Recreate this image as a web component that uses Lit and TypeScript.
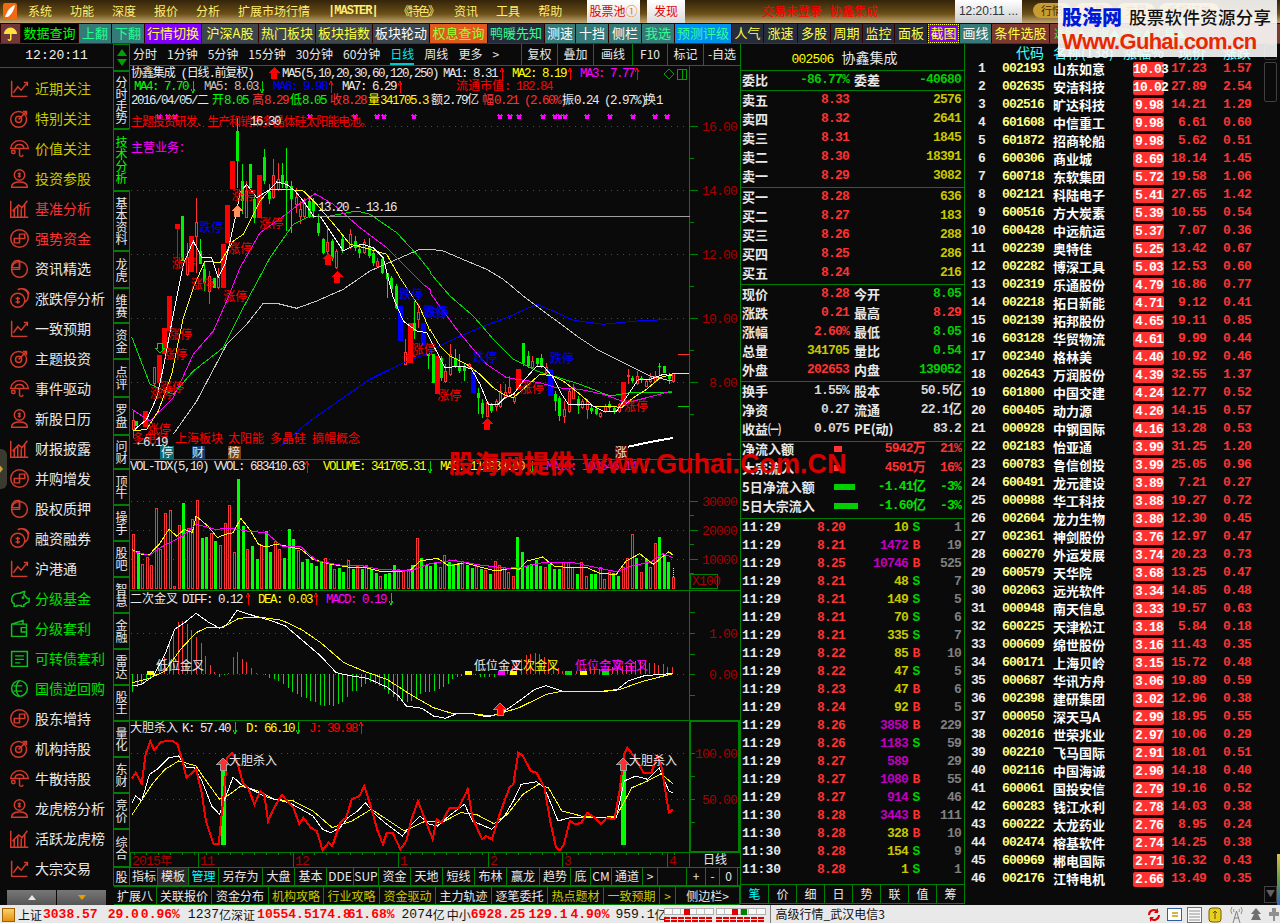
import { LitElement, html, css, svg } from 'lit';
import { customElement } from 'lit/decorators.js';

const UP = '#ff3232';
const GRID = '#008000';

// ---------- chart data, read off the picture ----------
type Pt = number[];
const za = ([x, y]: Pt) => [130 + x / 3, 100 + y / 3];
const zb = ([x, y]: Pt) => [430 + x / 3, 240 + y / 3];
const zc = ([x, y]: Pt) => [130 + x / 2.57, 440 + y / 3];
const zd = ([x, y]: Pt) => [130 + x / 2.57, 590 + y / 3];
const pairs = (s: string) => s.trim().split(/\s+/).map((p) => p.split(',').map(Number));
const poly = (list: Pt[]) => list.map((p) => `${p[0].toFixed(1)},${p[1].toFixed(1)}`).join(' ');

// x, body top, body bottom, wick top, wick bottom, kind
const CANDLES_A = `8,958,985,930,1010,h 19,960,975,0,0,g 46,930,978,0,0,s 73,800,848,800,860,h 88,762,845,0,0,s
103,680,760,0,0,s 116,585,690,0,0,s 142,370,385,385,470,s 157,345,480,0,0,g 170,470,520,425,525,h 184,405,513,0,0,s
197,365,405,290,515,h 211,450,490,415,490,g 223,505,545,480,570,g 238,525,570,510,610,h 253,530,560,530,560,g
265,530,558,500,565,h 280,430,560,0,0,s 292,312,425,0,0,s 307,180,265,0,0,s 320,90,180,50,260,g 335,240,300,190,340,g
347,270,350,240,350,h 361,190,260,190,260,g 373,295,350,280,365,g 388,222,352,0,0,s 403,168,240,145,250,g
416,270,295,250,310,g 430,222,290,175,295,h 443,235,265,185,270,h 457,222,245,185,260,g 469,240,262,140,390,g
484,255,295,240,395,g 497,290,310,260,335,h 510,325,345,300,370,h 523,305,345,290,350,h 537,300,345,290,350,g
550,300,330,290,350,g 565,365,395,340,405,g 580,415,455,410,460,g 592,425,450,375,470,h 607,420,475,415,480,g
619,450,500,445,505,h 635,415,450,400,455,g 660,400,440,385,445,h 674,420,440,405,450,g 688,445,455,430,470,g
703,425,455,415,460,h 716,435,465,410,470,g 730,455,485,450,495,g 742,480,495,470,500,h 757,475,515,470,520,g
770,515,535,515,590,g 784,530,565,525,575,g 797,555,620,550,625,g 811,615,720,0,0,b 825,755,790,715,790,h
839,665,780,0,0,s 853,665,690,600,715,g 865,635,655,610,680,h 880,665,735,0,0,b 893,755,765,755,805,g`;
const CANDLES_B = `8,340,425,340,425,g 20,345,458,0,0,s 34,350,410,345,420,g 46,390,420,370,425,h 61,340,400,310,405,h 74,350,375,325,380,g
88,375,390,340,395,g 103,375,390,365,420,g 116,370,380,365,385,h 130,390,455,0,0,b 143,455,470,440,520,g
157,485,520,475,530,g 170,485,525,480,528,h 184,490,510,485,515,g 197,480,495,475,510,h 211,450,495,430,500,h
224,455,470,430,475,h 238,440,455,405,460,h 252,470,480,460,490,h 265,385,445,0,0,s 280,305,365,305,375,g
293,345,375,330,380,g 307,362,380,345,385,h 320,352,370,350,375,g 334,350,375,340,380,g 347,380,395,365,400,h
361,385,465,0,0,b 374,460,480,450,510,g 388,470,525,465,540,g 403,505,525,480,545,h 416,450,510,440,515,h
429,440,472,430,475,h 443,475,495,465,520,g 457,480,500,475,505,h 470,480,505,475,535,h 484,500,510,495,520,g
497,503,520,500,522,g 511,518,525,514,530,h 525,495,510,490,515,h 538,490,500,480,510,g 552,500,510,495,520,g
566,490,510,485,515,h 580,423,495,0,0,s 593,402,405,385,430,h 607,410,420,405,425,g 620,405,428,390,432,h
634,410,418,405,425,g 647,420,435,415,438,h 661,408,420,395,425,h 675,405,420,390,425,h 688,375,378,365,405,g
703,375,395,375,395,g 716,405,415,395,430,g 730,398,422,395,425,h`;
const candles = [
  ...CANDLES_A.trim().split(/\s+/).map((c) => ({ c, f: za })),
  ...CANDLES_B.trim().split(/\s+/).map((c) => ({ c, f: zb })),
].map(({ c, f }) => {
  const p = c.split(',');
  const [x, t] = f([+p[0], +p[1]]);
  const b = f([+p[0], +p[2]])[1];
  const wt = +p[3] ? f([+p[0], +p[3]])[1] : 0;
  const wb = +p[4] ? f([+p[0], +p[4]])[1] : 0;
  return { x: Math.round(x), t, b, wt, wb, k: p[5] };
});

const MA_WHITE = [
  ...pairs('15,985 50,955 80,890 100,800 130,640 160,490 190,420 215,470 245,470 265,530 285,490 320,330 330,275 350,250 380,290 420,265 440,243 470,250 495,270 520,300 550,345 570,345 600,390 640,450 670,435 700,430 730,440 760,470 790,590 820,660 860,690 890,695').map(za),
  ...pairs('0,295 30,350 45,380 60,380 75,375 100,375 125,385 150,430 175,490 205,490 225,470 250,460 280,420 320,375 340,375 370,410 395,460 415,490 445,490 480,490 520,510 560,510 585,475 625,415 660,415 700,400 725,405').map(zb),
];
const MA_YELLOW = [
  ...pairs('10,990 50,985 85,930 125,820 160,650 190,560 225,480 270,485 310,420 340,400 390,300 420,265 470,265 520,270 560,310 620,380 660,430 720,445 770,460 810,530 870,620 900,690').map(za),
  ...pairs('0,265 30,315 60,345 110,370 150,400 190,440 220,460 250,470 290,435 330,400 370,405 400,420 450,460 490,495 540,495 575,500 610,470 650,445 690,410 725,400').map(zb),
];
const MA_MAGENTA = [
  ...pairs('5,925 60,960 130,890 190,760 250,690 290,600 330,500 390,395 440,360 500,315 555,278 610,310 690,380 770,440 820,490 880,550 900,565').map(za),
  ...pairs('0,155 40,210 80,265 130,325 170,370 230,410 330,425 380,440 450,445 520,460 590,485 650,470 725,450').map(zb),
];
const MA_GREEN = [
  ...pairs('5,708 60,850 130,880 190,810 280,740 340,620 420,470 490,370 540,345 600,345 680,330 720,340 800,395 860,460 900,510').map(za),
  ...pairs('0,95 60,165 130,225 190,295 250,355 320,390 370,405 450,430 540,465 600,455 725,455').map(zb),
];
const MA_GREY = [
  ...pairs('130,1000 200,900 290,730 350,670 400,607 440,607 500,622 560,600 640,565 720,510 800,475 870,445 900,445').map(za),
  ...pairs('0,25 40,30 110,60 170,85 220,115 280,165 340,210 380,240 440,285 500,325 580,365 660,405 725,420').map(zb),
];
const MA_BLUE = [
  ...pairs('450,1035 540,960 640,890 720,835 820,785 900,755').map(za),
  ...pairs('0,330 70,295 150,260 230,230 320,190 370,210 430,238 520,250 620,240 725,235').map(zb),
];

const LIMIT_UP = [
  ...pairs('50,985 115,700 100,760 60,875 90,858 125,485 182,548 280,585 295,442 305,283 388,365 845,745').map(za),
  ...pairs('22,462 270,442 582,495').map(zb),
];
const LIMIT_DOWN = [...pairs('208,378 808,578 880,630').map(za), ...pairs('-15,212 130,348 360,350').map(zb)];

const VOL = `r280 g330 r370 r350 r372 r202 r325 r217 r207 r437 r252 g186 r262 r235 r177 g290 g288 r276 g300 r312 r248 r192 r333 g113
g255 r325 g315 g353 r313 g270 g333 r300 r325 g350 g264 g295 r328 g363 g355 g365 g375 g360 r352 g365 r385 g380 g393 r357 g385 r375
g385 r373 g385 g395 r405 g400 g395 g373 r385 r390 r385 g373 r292 g350 g372 g375 g365 r378 r342 g363 g370 g365 r360 g372 g380 r375
g385 r388 g398 r360 r372 r378 r395 r405 g288 g333 g375 g370 g358 g375 r380 g370 g385 g385 r365 r365 r378 g398 r365 r405 g400 g400
r380 r415 r393 g395 g405 r380 r352 r280 g352 r393 g355 r380 r307 g288 g340 g362 r410`.trim().split(/\s+/);
const VOL_Y = pairs('5,325 30,340 50,340 75,310 100,265 120,285 140,265 160,275 170,225 200,255 225,290 245,280 265,275 285,232 310,270 330,310 350,318 375,310 400,315 440,325 470,355 510,368 560,378 600,378 640,390 680,392 720,388 745,360 790,352 820,375 860,365 900,378 940,390 980,382 1000,385 1020,360 1060,348 1090,375 1130,380 1170,378 1210,398 1250,400 1275,360 1310,338 1345,370 1385,332 1395,342').map(zc);
const VOL_M = pairs('5,330 50,343 75,322 110,300 135,285 170,250 220,265 260,262 300,270 350,275 390,315 440,318 480,360 540,372 600,375 640,385 720,390 770,368 830,358 900,372 970,382 1010,378 1060,365 1140,365 1200,380 1250,392 1290,375 1340,362 1370,338 1395,350').map(zc);

const HIST = [-55, -40, -30, -20, -12, -5, 15, 50, 100, 130, 155, 160, 150, 132, 110, 92, 55, 28, 5, -8, -2, 2, 52, 65, 45, 35, 18, 2, 1, -2, -12, -15, -22, -30, -42, -55, -60, -68, -72, -82, -85, -92, -95, -92, -95, -90, -85, -70, -50, -50, -38, -30, -25, -30, -35, -45, -60, -70, -80, -85, -85, -80, -70, -60, -55, -55, -50, -45, -40, -30, -15, -10, -5, 0, 0, -3, -8, -10, -10, -8, 5, 10, 18, 25, 35, 45, 58, 60, 62, 60, 52, 45, 32, 18, 8, 4, 5, 10, 15, 15, 20, 20, 15, 12, 20, 22, 20, 25, 28, 32, 38, 40, 40, 32, 32, 28, 30, 22, 22];
const DIFF = pairs('5,285 30,280 60,255 90,190 115,115 140,95 170,67 200,92 230,112 250,100 275,58 320,75 360,88 400,105 440,145 490,195 530,245 570,255 610,262 660,288 690,315 710,345 750,352 780,375 810,382 840,368 880,368 920,378 960,362 1000,330 1040,295 1070,284 1110,300 1150,302 1200,303 1250,298 1280,270 1320,255 1360,250 1395,248').map(zd);
const DEA = pairs('5,275 50,262 90,240 130,175 170,125 200,108 240,108 280,82 330,78 390,88 440,115 490,155 550,215 600,240 660,265 720,310 780,350 830,368 880,368 930,375 1000,350 1070,310 1100,303 1200,302 1260,295 1320,270 1395,248').map(zd);

const KDJ_J = pairs('5,562 15,545 30,578 40,490 52,450 62,478 80,452 110,450 122,460 135,510 145,560 170,535 185,610 195,690 215,760 228,760 240,620 250,500 262,485 275,510 290,575 305,595 320,640 335,600 345,610 355,690 370,650 390,612 420,650 435,700 445,680 465,710 480,720 495,778 510,755 520,765 540,695 555,680 570,625 590,615 602,585 620,650 635,715 650,760 660,725 675,725 695,775 710,750 722,690 740,630 760,690 778,745 788,685 800,695 822,650 845,650 868,595 880,680 905,745 915,735 930,745 950,670 975,590 985,580 998,485 1010,495 1030,540 1045,545 1065,590 1080,690 1095,770 1105,778 1115,760 1130,690 1145,700 1160,695 1175,665 1195,680 1210,700 1225,680 1245,685 1258,600 1270,490 1278,470 1295,495 1320,545 1340,545 1355,495 1365,520 1385,665 1395,655').map(zd);
const KDJ_K = pairs('5,635 15,615 30,630 50,550 70,535 100,500 125,495 145,530 165,530 185,570 210,645 230,670 245,620 265,558 285,580 320,600 345,615 370,625 410,635 440,655 470,675 495,715 515,725 540,710 560,680 585,660 605,635 630,670 660,700 700,735 720,705 745,675 770,700 790,705 825,670 860,640 880,690 930,715 960,680 985,630 1005,580 1045,572 1065,590 1100,690 1130,680 1160,680 1200,680 1250,680 1270,570 1300,555 1330,565 1360,530 1385,600 1395,605').map(zd);
const KDJ_D = pairs('5,672 20,645 60,575 90,535 125,510 170,525 190,560 230,625 250,615 285,585 330,600 370,625 420,630 470,660 520,710 570,690 620,655 660,685 705,720 760,690 800,695 850,665 890,670 935,698 970,670 1010,610 1050,580 1075,590 1110,660 1160,675 1210,680 1250,675 1290,590 1330,570 1365,548 1395,578').map(zd);

const CROSSES = [159, 168, 175, 310, 355, 377, 384, 414, 500, 510, 519, 543, 555, 560, 565, 587, 610, 633, 655, 667];

// ---------- svg helpers ----------
const CJK = /[\u3000-\u9fff\uff00-\uffef]/;
const mix = (s: string) =>
  s.split(/([\u3000-\u9fff\uff00-\uffef]+)/).filter(Boolean).map((p) =>
    CJK.test(p) ? svg`<tspan class="c">${p}</tspan>` : svg`<tspan class="m">${p}</tspan>`,
  );
const T = (x: number, y: number, s: string, c = '#e8e8e8', cls = '') =>
  svg`<text class=${cls} x=${x} y=${y} fill=${c}>${mix(s)}</text>`;
const upThin = (x: number, y: number) =>
  svg`<path d="M${x} ${y + 12}V${y}M${x - 2} ${y + 4}L${x} ${y}L${x + 2} ${y + 4}" stroke="#ff0000" fill="none"/>`;
const downThin = (x: number, y: number) =>
  svg`<path d="M${x} ${y}V${y + 12}M${x - 2} ${y + 8}L${x} ${y + 12}L${x + 2} ${y + 8}" stroke="#00d000" fill="none"/>`;
const bigUp = (x: number, y: number, fill = '#ff0000', stroke = 'none') =>
  svg`<path d="M${x} ${y}l6 6h-3v6h-6v-6h-3z" fill=${fill} stroke=${stroke}/>`;
const line = (list: Pt[], c: string, w = 1) =>
  svg`<polyline points=${poly(list)} fill="none" stroke=${c} stroke-width=${w}/>`;
const dots = (y: number) => svg`<line class="dot" x1="131" x2="689" y1=${y} y2=${y}/>`;
const hline = (y: number) => svg`<line x1="130" x2="740" y1=${y} y2=${y} stroke=${GRID}/>`;

@customElement('kline-chart')
export class KlineChart extends LitElement {
  static styles = css`
    :host { display: block; width: 610px; height: 803px; }
    svg { display: block; shape-rendering: crispEdges; }
    text { font-size: 12px; white-space: pre; }
    .c { font-family: "Noto Sans CJK SC", sans-serif; font-size: 12px; }
    .m { font-family: "Liberation Mono", monospace; font-size: 12.5px; letter-spacing: -1.5px; }
    .axis .m { letter-spacing: -.8px; font-size: 13px; }
    .tight .c { letter-spacing: -1.1px; }
    .dot { stroke: #008000; stroke-dasharray: 1 5; }
  `;

  private _candle(c: (typeof candles)[number]) {
    const colour = { h: UP, s: '#ff0000', g: '#00f000', b: '#0000ff' }[c.k] as string;
    const wide = c.k === 's' || c.k === 'b' ? 5 : 3;
    const wick = c.wt
      ? svg`<line x1=${c.x + 0.5} x2=${c.x + 0.5} y1=${c.wt} y2=${c.wb} stroke=${colour}/>`
      : '';
    const left = c.x - Math.floor(wide / 2);
    const body = c.k === 'h'
      ? svg`<rect x=${left + 0.5} y=${c.t} width="2" height=${c.b - c.t} fill="#0a0a0a" stroke=${colour}/>`
      : svg`<rect x=${left} y=${c.t} width=${wide} height=${c.b - c.t} fill=${colour}/>`;
    return svg`${wick}${body}`;
  }

  private _main() {
    return svg`
      ${[125, 189, 253, 317, 381].map(dots)}
      ${[['16.00', 125], ['14.00', 189], ['12.00', 253], ['10.00', 317], ['8.00', 381]].map(
        ([s, y]) => svg`<text class="axis" x="737" y=${(y as number) + 5} text-anchor="end" fill="#a80000">${mix(s as string)}</text>`,
      )}
      ${[125, 157, 189, 221, 253, 285, 317, 349, 381, 413].map((y) => svg`<line x1="690" x2=${y % 64 === 61 ? 698 : 694} y1=${y} y2=${y} stroke=${GRID}/>`)}

      ${T(131, 76, '协鑫集成 (日线.前复权)', '#f0f0f0', 'tight')}
      ${bigUp(274, 66)}
      ${T(282, 76, 'MA5(5,10,20,30,60,120,250)')}
      ${T(443, 76, 'MA1: 8.31')}${upThin(502, 67)}
      ${T(512, 76, 'MA2: 8.19', '#ffff00')}${upThin(570, 67)}
      ${T(580, 76, 'MA3: 7.77', '#ff00ff')}${upThin(637, 67)}
      ${T(134, 89, 'MA4: 7.70', '#00ff00')}${downThin(193, 80)}
      ${T(204, 89, 'MA5: 8.03', '#c0c0c0')}${downThin(262, 80)}
      ${T(273, 89, 'MA6: 9.98', '#0000ff')}${upThin(331, 80)}
      ${T(342, 89, 'MA7: 6.29')}${upThin(400, 80)}
      ${T(456, 89, '流通市值: 182.84', '#ff0000')}
      ${T(131, 103, '2016/04/05/二')}
      ${T(212, 103, '开8.05', '#00ff00')}
      ${T(252, 103, '高8.29', '#ff3232')}
      ${T(290, 103, '低8.05', '#00ff00')}
      ${T(330, 103, '收8.28', '#ff3232')}
      ${T(368, 103, '量341705.3', '#ffff00')}
      ${T(431, 103, '额2.79亿')}
      ${T(482, 103, '幅0.21 (2.60%)', '#ff3232')}
      ${T(562, 103, '振0.24 (2.97%)')}
      ${T(644, 103, '换1')}
      <path d="M669 68l5 5-5 5-5-5z" fill="none" stroke="#00a000"/>
      <path d="M677.5 68.5h9v10h-9zM682 68.5v10" fill="none" stroke="#00a000"/>

      ${CROSSES.map((x) => svg`<path d="M${x - 2} 114l4 4m0-4l-4 4" stroke="#ff00ff" fill="none" stroke-width="1.5"/>`)}
      ${candles.map((c) => this._candle(c))}
      ${line(MA_GREY, '#c8c8c8')}${line(MA_BLUE, '#0000ff')}${line(MA_GREEN, '#00e000')}
      ${line(MA_MAGENTA, '#ff00ff')}${line(MA_YELLOW, '#ffff00')}${line(MA_WHITE, '#ffffff')}

      <line x1="316" x2="690" y1="215" y2="215" stroke="#a0a0a0"/>
      ${T(318, 210, '13.20 - 13.16')}
      <line x1="678" x2="689" y1="353" y2="353" stroke="#ff3232"/>
      <line x1="672" x2="689" y1="372" y2="372" stroke="#ffff00"/>
      <line x1="678" x2="689" y1="405" y2="405" stroke="#00c000"/>
      <polyline points="627,446 650,441 673,437" fill="none" stroke="#ffffff" stroke-width="2"/>

      ${T(131, 125, '主题投资研发、生产和销售多晶体硅太阳能电池。', '#ff0000', 'tight')}
      ${T(250, 124, '16.30')}
      ${T(131, 151, '主营业务：', '#ff00ff')}
      ${LIMIT_UP.map(([x, y]) => T(x, y + 5, '涨停', '#ff0000'))}
      ${LIMIT_DOWN.map(([x, y]) => T(x, y + 5, '跌停', '#0000ff'))}
      ${T(132, 442, '多电行', '#ff0000')}
      ${T(175, 442, '上海板块', '#ff0000')}${T(228, 442, '太阳能', '#ff0000')}
      ${T(270, 442, '多晶硅', '#ff0000')}${T(312, 442, '摘帽概念', '#ff0000')}
      ${T(137, 445, '←6.19')}

      ${bigUp(328, 252)}${bigUp(337, 270)}${bigUp(410, 350)}${bigUp(487, 417)}
      ${bigUp(237, 204, '#ff9060')}
      <path d="M160 352l-5-5h2.5v-5h5v5h2.5z" fill="none" stroke="#00e000"/>

      <rect x="160" y="445" width="14" height="13" fill="#0a6a70"/>${T(161, 456, '停')}
      <rect x="192" y="445" width="13" height="13" fill="#103c6a"/>${T(192, 456, '财')}
      <rect x="228" y="445" width="13" height="13" fill="#7a4010"/>${T(228, 456, '榜')}
      <rect x="615" y="445" width="13" height="13" fill="#700000"/>${T(615, 456, '涨')}
    `;
  }

  private _volume() {
    return svg`
      ${[500, 529, 558].map(dots)}
      ${[['30000', 500], ['20000', 529], ['10000', 558]].map(
        ([s, y]) => svg`<text class="axis" x="737" y=${(y as number) + 5} text-anchor="end" fill="#a80000">${mix(s as string)}</text>`,
      )}
      ${[500, 514, 529, 543, 558, 572].map((y) => svg`<line x1="690" x2=${y % 29 === 7 ? 698 : 694} y1=${y} y2=${y} stroke=${GRID}/>`)}
      ${T(130, 469, 'VOL-TDX(5,10)')}
      ${T(214, 469, 'VVOL: 683410.63')}${upThin(307, 460)}
      ${T(323, 469, 'VOLUME: 341705.31', '#ffff00')}${downThin(430, 460)}
      ${T(440, 469, 'MA5: 113938.00', '#ffff00')}${downThin(532, 460)}
      ${T(546, 469, 'MA10: 103546.14', '#ff00ff')}${downThin(645, 460)}
      ${VOL.map((v, i) => {
        const x = Math.round(132 + i * 4.576);
        const top = 440 + +v.slice(1) / 3;
        return v[0] === 'g'
          ? svg`<rect x=${x} y=${top} width="3" height=${587.5 - top} fill="#00ff00"/>`
          : svg`<rect x=${x + 0.5} y=${top} width="2" height=${587.5 - top} fill="#0a0a0a" stroke=${UP}/>`;
      })}
      ${line(VOL_Y, '#ffff00')}${line(VOL_M, '#ff00ff')}
      <line x1="673.5" x2="673.5" y1="567" y2="577" stroke="#ffff00" stroke-dasharray="1 1"/>
      <rect x="690.5" y="573.5" width="27" height="14" fill="none" stroke=${GRID}/>
      <text class="axis" x="692" y="584" fill="#a80000">${mix('X100')}</text>
    `;
  }

  private _macd() {
    return svg`
      ${[632, 673].map(dots)}
      <text class="axis" x="737" y="637" text-anchor="end" fill="#a80000">${mix('1.00')}</text>
      <text class="axis" x="737" y="678" text-anchor="end" fill="#a80000">${mix('0.00')}</text>
      ${[611, 632, 653, 673, 694].map((y) => svg`<line x1="690" x2="695" y1=${y} y2=${y} stroke=${GRID}/>`)}
      ${T(130, 602, '二次金叉')}
      ${T(182, 602, 'DIFF: 0.12')}${upThin(248, 592)}
      ${T(258, 602, 'DEA: 0.03', '#ffff00')}${upThin(316, 592)}
      ${T(326, 602, 'MACD: 0.19', '#ff00ff')}${downThin(391, 592)}
      ${HIST.map((h, i) => {
        const x = Math.round(132 + i * 4.576) + 0.5;
        const y = 673 - h / 3;
        return svg`<line x1=${x} x2=${x} y1="673" y2=${y} stroke=${h > 0 ? UP : '#00e000'}/>`;
      })}
      ${line(DIFF, '#ffffff')}${line(DEA, '#ffff00')}
      ${[[147, '#ffff00'], [465, '#ffff00'], [498, '#ff00ff'], [510, '#ffff00'], [565, '#00e000'], [580, '#ffff00'], [602, '#00e000']].map(
        ([x, c]) => svg`<rect x=${x} y="670" width="7" height="4" fill=${c}/>`,
      )}
      ${T(156, 669, '低位金叉')}${T(474, 669, '低位金叉')}
      ${T(511, 669, '二次金叉', '#ffff00')}
      ${T(575, 669, '低位金叉', '#ff00ff')}${T(600, 669, '二次金叉', '#ff00ff')}
      ${bigUp(500, 702, '#ff0000', '#909090')}
    `;
  }

  private _kdj() {
    return svg`
      ${[752, 798].map(dots)}
      <text class="axis" x="737" y="757" text-anchor="end" fill="#a80000">${mix('100.00')}</text>
      <text class="axis" x="737" y="803" text-anchor="end" fill="#a80000">${mix('50.00')}</text>
      ${[752, 775, 798, 821].map((y) => svg`<line x1="690" x2="695" y1=${y} y2=${y} stroke=${GRID}/>`)}
      <rect x="690" y="720" width="49" height="131" fill="none" stroke=${GRID} stroke-width="2"/>
      ${T(130, 731, '大胆杀入')}
      ${T(182, 731, 'K: 57.40')}${downThin(235, 721)}
      ${T(246, 731, 'D: 66.10', '#ffff00')}${downThin(298, 721)}
      ${T(309, 731, 'J: 39.98', '#ff0000')}${upThin(361, 721)}
      <rect x="221" y="767" width="5" height="77" fill="#00ff00"/>
      <rect x="621" y="767" width="5" height="77" fill="#00ff00"/>
      ${line(KDJ_D, '#ffff00')}${line(KDJ_K, '#ffffff')}${line(KDJ_J, '#ff0000', 2)}
      ${bigUp(223, 757, '#ff3030', '#a0a0a0')}${bigUp(623, 757, '#ff3030', '#a0a0a0')}
      ${T(229, 764, '大胆杀入')}${T(629, 764, '大胆杀入')}
    `;
  }

  private _dates() {
    const months: [string, number][] = [['2015年', 132], ['11', 200], ['12', 295], ['1', 400], ['2', 490], ['3', 564], ['4', 669]];
    return svg`
      ${months.map(([s, x]) => svg`
        <line x1=${x - 2} x2=${x - 2} y1="851" y2="867" stroke=${GRID}/>
        <text x=${x} y="864" fill="#a80000" class="axis">${mix(s)}</text>`)}
      ${Array.from({ length: 46 }, (_, i) => svg`<line x1=${134 + i * 12} x2=${134 + i * 12} y1="851" y2="854" stroke=${GRID}/>`)}
      ${T(703, 863, '日线')}
    `;
  }

  render() {
    return html`
      <svg width="610" height="803" viewBox="130 64 610 803">
        <line x1="689.5" x2="689.5" y1="64" y2="867" stroke=${GRID}/>
        ${this._main()}${this._volume()}${this._macd()}${this._kdj()}${this._dates()}
        ${[64.5, 458.5, 589.5, 719.5, 851.5, 866.5].map(hline)}
      </svg>
    `;
  }
}

// ---------- left navigation ----------
const ICONS: Record<string, unknown> = {
  line: svg`<path d="M3 3v18h18M5 17l5-7 4 4 7-9M17 5h4v4"/>`,
  target: svg`<circle cx="11" cy="13" r="9"/><circle cx="11" cy="13" r="3.5" fill="currentColor"/><path d="M11 13l9-9M16 4h4v4"/>`,
  umbrella: svg`<path d="M2 12a10 9 0 0 1 20 0zM7 12c0-6 10-6 10 0M12 12v7a2 2 0 0 0 4 0"/><circle cx="5" cy="16" r="2"/>`,
  person: svg`<circle cx="12" cy="8" r="6"/><path d="M3 22c0-5 4-6 9-6s9 1 9 6zM12 5v6M10 6.5h3.5M10 9.5h3.5"/>`,
  bars: svg`<path d="M2 3v19h20M6 21v-8M10 21v-12M14 21v-9M18 21v-14M4 15l7-7 4 3 6-8"/>`,
  swirl: svg`<circle cx="12" cy="12" r="10"/><path d="M12 7h6v5h-6v5H6v-5h6z"/>`,
  pie: svg`<circle cx="12" cy="13" r="9"/><path d="M3 13h9V4"/><path d="M6 4a9 9 0 0 1 6-1v8H3a9 9 0 0 1 3-7z" fill="none"/>`,
  coins: svg`<circle cx="10" cy="14" r="8"/><path d="M10 2a8 8 0 0 1 12 7 8 8 0 0 1-4 7M14 1a8 8 0 0 1 9 6M10 10v8M7.5 12h5M7.5 16h5"/>`,
  piggy: svg`<path d="M3 13c0-5 4-7 9-7 2 0 3-2 6-2l-1 4c2 1 3 3 4 4h2v4l-3 1c-1 1-2 2-3 2v2h-3v-1H9v1H6v-3c-2-1-3-3-3-5z"/><circle cx="16" cy="11" r=".8"/>`,
  wallet: svg`<path d="M3 7h17v14H3zM3 7l13-4v4M20 11h-6v5h6"/>`,
  book: svg`<path d="M3 4h18v17H3zM7 9h10M7 13h10M7 17h6"/>`,
  coin: svg`<circle cx="12" cy="12" r="9"/><path d="M12 3c-5 4-5 14 0 18M5 9h10M5 15h10"/>`,
};

const RED_ICON = '#d63a2a';
const GREEN_ICON = '#10c020';
const YELLOW = '#c8c800';
const NAV: [string, string, string, string?][] = [
  ['近期关注', 'line', YELLOW], ['特别关注', 'target', YELLOW], ['价值关注', 'umbrella', YELLOW], ['投资参股', 'person', YELLOW],
  ['基准分析', 'bars', UP], ['强势资金', 'swirl', UP], ['资讯精选', 'pie', '#e8e8e8'], ['涨跌停分析', 'coins', '#e8e8e8'],
  ['一致预期', 'line', '#e8e8e8'], ['主题投资', 'target', '#e8e8e8'], ['事件驱动', 'umbrella', '#e8e8e8'], ['新股日历', 'person', '#e8e8e8'],
  ['财报披露', 'bars', '#e8e8e8'], ['并购增发', 'swirl', '#e8e8e8'], ['股权质押', 'pie', '#e8e8e8'], ['融资融券', 'coins', '#e8e8e8'],
  ['沪港通', 'line', '#e8e8e8'],
  ['分级基金', 'piggy', '#00e000', GREEN_ICON], ['分级套利', 'wallet', '#00e000', GREEN_ICON], ['可转债套利', 'book', '#00e000', GREEN_ICON], ['国债逆回购', 'coin', '#00e000', GREEN_ICON],
  ['股东增持', 'swirl', '#e8e8e8'], ['机构持股', 'target', '#e8e8e8'], ['牛散持股', 'umbrella', '#e8e8e8'], ['龙虎榜分析', 'person', '#e8e8e8'],
  ['活跃龙虎榜', 'bars', '#e8e8e8'], ['大宗交易', 'line', '#e8e8e8'],
];

@customElement('side-nav')
export class SideNav extends LitElement {
  static styles = css`
    :host { display: flex; flex-direction: column; width: 113px; position: relative; font-family: "Noto Sans CJK SC", sans-serif; background: #0a0a0a; }
    .clock { height: 23px; text-align: center; color: #f0f0f0; font: 13px/23px "Liberation Mono", monospace; border-bottom: 1px solid #008000; }
    .list { padding-top: 5px; }
    .row { display: flex; align-items: center; height: 30px; padding-left: 9px; font-size: 14px; white-space: nowrap; }
    .row svg { width: 21px; height: 21px; margin-right: 5px; flex: none; }
    .row svg * { stroke: currentColor; fill: none; stroke-width: 1.7; }
    .pager { display: flex; gap: 1px; margin: 7px 0 0 7px; }
    .pager div { width: 49px; height: 15px; background: linear-gradient(#777, #555); display: flex; align-items: center; justify-content: center; }
    .up { width: 0; height: 0; border: 4px solid transparent; border-bottom: 5px solid #e8e8e8; border-top: 0; }
    .down { width: 0; height: 0; border: 4px solid transparent; border-top: 5px solid #e8a000; border-bottom: 0; }
    .handle { position: absolute; left: -3px; top: 405px; width: 10px; height: 40px; border-radius: 0 6px 6px 0; background: #3a3a30; }
    .handle::after { content: ""; position: absolute; left: 2px; top: 15px; border: 5px solid transparent; border-left: 4px solid #c8a040; }
  `;

  render() {
    return html`
      <div class="clock">12:20:11</div>
      <div class="list">
        ${NAV.map(([label, icon, colour, ic]) => html`
          <div class="row" style="color:${colour}">
            <svg viewBox="0 0 24 24" style="color:${ic ?? RED_ICON}">${ICONS[icon]}</svg>${label}
          </div>`)}
      </div>
      <div class="pager"><div><span class="up"></span></div><div><span class="down"></span></div></div>
      <div class="handle"></div>
    `;
  }
}

// ---------- quote panel ----------
const G = '#00d000';
const Y = '#c8c800';
const W = '#d8d8d8';
const SELL = [['卖五', '8.33', '2576'], ['卖四', '8.32', '2641'], ['卖三', '8.31', '1845'], ['卖二', '8.30', '18391'], ['卖一', '8.29', '3082']];
const BUY = [['买一', '8.28', '636'], ['买二', '8.27', '183'], ['买三', '8.26', '288'], ['买四', '8.25', '286'], ['买五', '8.24', '216']];
const STATS: string[][] = [
  ['现价', '8.28', UP, '今开', '8.05', G], ['涨跌', '0.21', UP, '最高', '8.29', UP], ['涨幅', '2.60%', UP, '最低', '8.05', G],
  ['总量', '341705', Y, '量比', '0.54', G], ['外盘', '202653', UP, '内盘', '139052', G],
];
const FINANCE: string[][] = [
  ['换手', '1.55%', W, '股本', '50.5亿', W], ['净资', '0.27', W, '流通', '22.1亿', W], ['收益㈠', '0.075', W, 'PE(动)', '83.2', W],
];
const FLOWS: [string, number, string, string, string][] = [
  ['净流入额', 8, UP, '5942万', '21%'], ['大宗流入', 6, UP, '4501万', '16%'],
  ['5日净流入额', 21, '#00d000', '-1.41亿', '-3%'], ['5日大宗流入', 24, '#00d000', '-1.60亿', '-3%'],
];
const TICKS: [string, string, number, string, number][] = [
  ['11:29', '8.20', 10, 'S', 1], ['11:29', '8.21', 1472, 'B', 19], ['11:29', '8.25', 10746, 'B', 525], ['11:29', '8.21', 48, 'S', 7],
  ['11:29', '8.21', 149, 'S', 5], ['11:29', '8.21', 70, 'S', 6], ['11:29', '8.21', 335, 'S', 7], ['11:29', '8.22', 85, 'B', 10],
  ['11:29', '8.22', 47, 'S', 5], ['11:29', '8.23', 47, 'B', 6], ['11:29', '8.24', 92, 'B', 5], ['11:29', '8.26', 3858, 'B', 229],
  ['11:29', '8.26', 1183, 'S', 59], ['11:29', '8.27', 589, '', 29], ['11:29', '8.27', 1080, 'B', 55], ['11:29', '8.27', 914, 'S', 46],
  ['11:30', '8.28', 3443, 'B', 111], ['11:30', '8.28', 328, 'B', 10], ['11:30', '8.28', 154, 'S', 9], ['11:30', '8.28', 1, 'S', 1],
];

@customElement('quote-panel')
export class QuotePanel extends LitElement {
  static styles = css`
    :host { display: flex; flex-direction: column; width: 225px; height: 860px; box-sizing: border-box; border-left: 1px solid #008000; border-right: 1px solid #008000; color: #e8e8e8; font-family: "Noto Sans CJK SC", sans-serif; font-size: 13px; font-weight: 700; background: #0a0a0a; }
    .num { font-family: "Liberation Mono", "Noto Sans CJK SC", monospace; font-size: 13px; letter-spacing: -.8px; font-weight: 700; text-align: right; white-space: nowrap; }
    .head { height: 27px; line-height: 26px; text-align: center; font-weight: 400; font-size: 14px; border-bottom: 1px solid #008000; box-sizing: border-box; padding-right: 16px; }
    .head span { color: #ffff00; font: 13px "Liberation Mono", monospace; letter-spacing: -.8px; margin-right: 8px; }
    .sec { border-bottom: 1px solid #008000; box-sizing: border-box; }
    .sec97 { height: 97px; }
    .sec60 { height: 60px; }
    .flows { height: 80px; margin-top: -3px; }
    .two { display: grid; grid-template-columns: 32px 75px 5px 38px 1fr; height: 19px; line-height: 17px; padding: 0 3px 0 1px; white-space: nowrap; }
    .two > :nth-child(3) { grid-column: 4; }
    .ratio { height: 20px; }
    .flow { display: grid; grid-template-columns: 92px 36px 55px 1fr; height: 19px; line-height: 18px; padding: 0 3px 0 1px; white-space: nowrap; align-items: center; }
    .bar { height: 6px; }
    .tick { display: grid; grid-template-columns: 40px 63px 63px 17px 1fr; height: 18px; line-height: 18px; padding: 0 3px 0 1px; }
    .time { text-align: left; letter-spacing: 0; color: #e8e8e8; }
    .bs { text-align: center; letter-spacing: 0; }
    .tabs { display: flex; height: 18px; line-height: 17px; font-weight: 400; font-size: 12px; border-top: 1px solid #008000; border-bottom: 1px solid #008000; margin-top: auto; box-sizing: content-box; }
    .tabs div { flex: 1; text-align: center; border-right: 1px solid #008000; }
    .tabs div:last-child { border-right: 0; }
    .tabs .on { color: #00ffff; }
  `;

  private _two(r: string[]) {
    return html`<div class="two">
      <div>${r[0]}</div><div class="num" style="color:${r[2]}">${r[1]}</div>
      <div>${r[3]}</div><div class="num" style="color:${r[5]}">${r[4]}</div>
    </div>`;
  }

  private _book(r: string[]) {
    return html`<div class="two">
      <div>${r[0]}</div><div class="num" style="color:${UP}">${r[1]}</div>
      <div></div><div class="num" style="color:${Y}">${r[2]}</div>
    </div>`;
  }

  render() {
    return html`
      <div class="head"><span>002506</span>协鑫集成</div>
      <div class="sec ratio">${this._two(['委比', '-86.77%', G, '委差', '-40680', G])}</div>
      <div class="sec sec97">${SELL.map((r) => this._book(r))}</div>
      <div class="sec sec97">${BUY.map((r) => this._book(r))}</div>
      <div class="sec sec97">${STATS.map((r) => this._two(r))}</div>
      <div class="sec sec60">${FINANCE.map((r) => this._two(r))}</div>
      <div class="sec flows">
        ${FLOWS.map(([label, w, c, amount, pct]) => html`<div class="flow">
          <div>${label}</div>
          <div class="bar" style="width:${w}px;background:${c}"></div>
          <div class="num" style="color:${c === UP ? UP : '#00e000'};grid-column:3">${amount}</div>
          <div class="num" style="color:${c === UP ? UP : '#00e000'}">${pct}</div>
        </div>`)}
      </div>
      ${TICKS.map(([t, p, v, side, n]) => html`<div class="tick">
        <div class="num time">${t}</div>
        <div class="num" style="color:${UP}">${p}</div>
        <div class="num" style="color:${v >= 500 ? '#c000c0' : Y}">${v}</div>
        <div class="num bs" style="color:${side === 'B' ? UP : G}">${side}</div>
        <div class="num" style="color:#808080">${n}</div>
      </div>`)}
      <div class="tabs">${['笔', '价', '细', '日', '势', '联', '值', '筹'].map((t, i) => html`<div class=${i === 0 ? 'on' : ''}>${t}</div>`)}</div>
    `;
  }
}

// ---------- ranked stock list ----------
const STOCKS = `002193 山东如意 10.03 17.23 1.57|002635 安洁科技 10.02 27.89 2.54|002516 旷达科技 9.98 14.21 1.29|601608 中信重工 9.98 6.61 0.60|601872 招商轮船 9.98 5.62 0.51|600306 商业城 8.69 18.14 1.45|600718 东软集团 5.72 19.58 1.06|002121 科陆电子 5.41 27.65 1.42|600516 方大炭素 5.39 10.55 0.54|600428 中远航运 5.37 7.07 0.36|002239 奥特佳 5.25 13.42 0.67|002282 博深工具 5.03 12.53 0.60|002319 乐通股份 4.79 16.86 0.77|002218 拓日新能 4.71 9.12 0.41|002139 拓邦股份 4.65 19.11 0.85|603128 华贸物流 4.61 9.99 0.44|002340 格林美 4.40 10.92 0.46|002643 万润股份 4.39 32.55 1.37|601800 中国交建 4.24 12.77 0.52|600405 动力源 4.20 14.15 0.57|000928 中钢国际 4.16 13.28 0.53|002183 怡亚通 3.99 31.25 1.20|600783 鲁信创投 3.99 25.05 0.96|600491 龙元建设 3.89 7.21 0.27|000988 华工科技 3.88 19.27 0.72|002604 龙力生物 3.80 12.30 0.45|002361 神剑股份 3.76 12.97 0.47|600270 外运发展 3.74 20.23 0.73|600579 天华院 3.68 13.25 0.47|002063 远光软件 3.34 14.85 0.48|000948 南天信息 3.33 19.57 0.63|600225 天津松江 3.18 5.84 0.18|000609 绵世股份 3.16 11.43 0.35|600171 上海贝岭 3.15 15.72 0.48|000687 华讯方舟 3.06 19.89 0.59|002398 建研集团 3.02 12.96 0.38|000050 深天马A 2.99 18.95 0.55|002016 世荣兆业 2.97 10.06 0.29|002210 飞马国际 2.91 18.01 0.51|002116 中国海诚 2.90 14.18 0.40|600061 国投安信 2.79 19.16 0.52|600283 钱江水利 2.78 14.03 0.38|600222 太龙药业 2.76 8.95 0.24|002474 榕基软件 2.74 14.25 0.38|600969 郴电国际 2.71 16.32 0.43|002176 江特电机 2.66 13.49 0.35`
  .split('|').map((r) => r.split(' '));

@customElement('stock-list')
export class StockList extends LitElement {
  static styles = css`
    :host { display: flex; flex: 1; height: 861px; background: #0a0a0a; font-family: "Noto Sans CJK SC", sans-serif; }
    .body { width: 299px; }
    .grid { display: grid; grid-template-columns: 20px 17px 42px 9px 80px 31px 42px 45px; height: 18px; line-height: 18px; align-items: center; white-space: nowrap; }
    .hdr { color: #40ffff; font-size: 14px; height: 16px; line-height: 16px; }
    .hdr div { white-space: nowrap; }
    .code-h { grid-column: 2 / 4; }
    .pct-h { margin-left: -11px; }
    .r { text-align: right; }
    .num { font-family: "Liberation Mono", monospace; font-size: 13px; letter-spacing: -.8px; font-weight: 700; }
    .idx { color: #e8e8e8; }
    .code { color: #ffff80; grid-column: 3; }
    .name { color: #fff; font-weight: 700; font-size: 13px; grid-column: 5; }
    .pct { color: #fff; background: #ff3232; border-radius: 2px; height: 15px; line-height: 15px; direction: rtl; unicode-bidi: plaintext; text-align: right; padding-right: 1px; box-sizing: border-box; }
    .up { color: #ff3232; }
    .scroll { display: flex; flex-direction: column; width: 13px; }
    .btn { height: 14px; border: 1px solid #303030; border-radius: 2px; }
    .thumb { height: 38px; margin-top: 2px; border: 1px solid #404040; border-radius: 2px; }
    .end { margin-top: auto; height: 15px; margin-bottom: 2px; border: 1px solid #404040; color: #606060; font-size: 9px; text-align: center; }
    .strip { width: 3px; margin-top: 810px; height: 51px; background: linear-gradient(#e0c040, #60a040 50%, #3060c0); }
  `;

  render() {
    return html`
      <div class="body">
        <div class="grid hdr">
          <div></div>
          <div class="r code-h">代码</div><div></div>
          <div>名称(138)</div>
          <div class="r pct-h">涨幅%</div>
          <div class="r">现价</div><div class="r">涨跌</div>
        </div>
        ${STOCKS.map((s, i) => html`<div class="grid">
          <div class="num idx r">${i + 1}</div>
          <div class="num code">${s[0]}</div>
          <div class="name">${s[1]}</div>
          <div class="num pct">${s[2]}</div>
          <div class="num up r">${s[3]}</div>
          <div class="num up r">${s[4]}</div>
        </div>`)}
      </div>
      <div class="scroll">
        <div class="btn"></div><div class="thumb"></div>
        <div class="end">▼</div>
      </div>
      <div class="strip"></div>
    `;
  }
}

// ---------- page shell ----------
const MENU = ['系统', '功能', '深度', '报价', '分析', '扩展市场行情', '|MASTER|', '《特色》', '资讯', '工具', '帮助'];
type Tool = [string, number, string, string];
const TEAL = '#357a78';
const SLATE = '#3c464c';
const NAVY = '#262c3c';
const TOOLS: Tool[] = [
  ['数据查询', 57, '#000', '#00ff00'], ['上翻', 32, TEAL, '#20ff90'], ['下翻', 32, TEAL, '#20ff90'], ['行情切换', 56, '#8000ff', '#ffff40'],
  ['沪深A股', 56, SLATE, '#ffff40'], ['热门板块', 56, SLATE, '#ffff40'], ['板块指数', 56, SLATE, '#ffff40'], ['板块轮动', 56, SLATE, '#fff'],
  ['权息查询', 57, '#e05a20', '#90ff30'], ['鸭暖先知', 56, NAVY, '#30ff90'], ['测速', 30, TEAL, '#fff'], ['十挡', 32, TEAL, '#fff'],
  ['侧栏', 32, TEAL, '#fff'], ['我选', 32, TEAL, '#30ff90'], ['预测评级', 56, '#0090f0', '#30ff90'], ['人气', 31, NAVY, '#ffff40'],
  ['涨速', 33, NAVY, '#ffff40'], ['多股', 32, NAVY, '#ffff40'], ['周期', 31, NAVY, '#ffff40'], ['监控', 31, NAVY, '#ffff40'],
  ['面板', 32, NAVY, '#ffff40'], ['截图', 31, '#8000ff', '#ffff40'], ['画线', 31, TEAL, '#fff'], ['条件选股', 57, '#7a3a30', '#ffff40'],
];
const PERIODS = ['分时', '1分钟', '5分钟', '15分钟', '30分钟', '60分钟', '日线', '周线', '更多', '>'];
const ACTIONS: [string, number][] = [['复权', 36], ['叠加', 36], ['画线', 39], ['F10', 35], ['标记', 36], ['-自选', 37]];
const VTABS: [string, number][] = [
  ['分时走势', 58], ['技术分析', 62], ['基本资料', 60], ['龙虎', 37], ['维赛', 35], ['资金', 36], ['点评', 38], ['罗盘', 38], ['问财', 34], ['顶牛', 36],
  ['操手', 36], ['股吧', 36], ['智慧', 36], ['金融', 36], ['雷达', 36], ['股王', 36], ['量化', 36], ['东财', 36], ['竞价', 36], ['综合', 38],
];
const ROW1: [string, number][] = [
  ['指标', 27], ['模板', 31], ['管理', 30], ['另存为', 44], ['大盘', 32], ['基本', 32], ['DDE', 27], ['SUP', 25], ['资金', 32], ['天地', 32], ['短线', 32],
  ['布林', 32], ['赢龙', 33], ['趋势', 31], ['底', 20], ['CM', 21], ['通道', 31], ['>', 15], ['', 29], ['+', 19], ['-', 14], ['0', 18],
];
const ROW2: [string, number, boolean][] = [
  ['扩展八', 43, false], ['关联报价', 55, false], ['资金分布', 57, false], ['机构攻略', 55, true], ['行业攻略', 56, true], ['资金驱动', 56, true],
  ['主力轨迹', 56, false], ['逐笔委托', 56, false], ['热点题材', 56, true], ['一致预期', 56, true], ['>', 16, true], ['侧边栏>', 64, false],
];
const STATUS: [string, string, number][] = [
  ['上证', 'k', 0], ['3038.57', 'n', 1], ['29.0', 'n', 10], ['0.96%', 'n', 2], ['1237', 'b', 8], ['亿', 'k', 0],
  ['深证', 'k', 0], ['10554.51', 'n', 2], ['74.8', 'n', 0], ['61.68%', 'n', -3], ['2074', 'b', 7], ['亿', 'k', 0],
  ['中小', 'k', 2], ['6928.25', 'n', 0], ['129.1', 'n', 3], ['4.90%', 'n', 3], ['959.1', 'b', 6], ['亿', 'k', 0],
];

@customElement('app-root')
export class AppRoot extends LitElement {
  static styles = css`
    :host { display: block; position: relative; width: 1280px; height: 923px; overflow: hidden; background: #0a0a0a; font-family: "Noto Sans CJK SC", "Liberation Sans", sans-serif; }
    .menu { display: flex; height: 23px; background: linear-gradient(#33240a, #6b4e18 60%, #c2a870); align-items: stretch; }
    .logo { width: 14px; height: 17px; margin: 3px 11px 0 3px; flex: none; }
    .mitems { display: flex; gap: 18px; width: 559px; flex: none; color: #ffee70; font-size: 12px; line-height: 22px; white-space: nowrap; }
    .master { font: 700 12px/22px "Liberation Mono", monospace; letter-spacing: -1px; width: 52px; }
    .spec { letter-spacing: -2px; width: 38px; }
    .wtab { background: linear-gradient(#fff, #dcdcdc); color: #e00000; font-size: 12px; line-height: 22px; text-align: center; flex: none; }
    .pool { width: 53px; }
    .pool span { color: #e08000; }
    .find { width: 38px; margin-left: 7px; }
    .login { width: 270px; color: #ff0000; font-size: 12px; line-height: 22px; text-align: center; flex: none; }
    .time { width: 67px; background: linear-gradient(#fff, #ccc); color: #333; font: 12px/22px "Liberation Sans", sans-serif; text-align: center; flex: none; }
    .pills { display: flex; gap: 4px; margin-left: 11px; padding-top: 3px; }
    .pills div { height: 15px; line-height: 15px; padding: 0 8px; border-radius: 8px; background: #c89c30; color: #402800; font-size: 11px; white-space: nowrap; }

    .tools { display: flex; gap: 1px; height: 19px; padding: 1px 0 0 1px; background: #300; border-bottom: 1px solid #c00000; box-sizing: content-box; font-size: 13px; line-height: 18px; white-space: nowrap; }
    .tools div { text-align: center; flex: none; }
    .umb { width: 19px; background: #703838; display: flex; align-items: center; justify-content: center; }
    .dot-b { outline: 1px dotted #ffff40; outline-offset: -1px; }
    .more { flex: 1 !important; background: #7a3a30; color: #30e060; font-size: 11px; text-align: left !important; padding-left: 4px; }

    .main { display: flex; height: 861px; }
    .center { display: flex; flex-direction: column; width: 627px; flex: none; font-size: 12px; color: #e8e8e8; }
    .upper { display: flex; height: 842px; }
    .vtabs { width: 17px; flex: none; display: flex; flex-direction: column; box-sizing: border-box; }
    .arrows { height: 27px; box-sizing: border-box; border: 1px solid #008000; display: flex; flex-direction: column; align-items: center; justify-content: center; gap: 3px; }
    .tri-u { border: 5px solid transparent; border-bottom: 7px solid #00a000; border-top: 0; }
    .tri-d { border: 5px solid transparent; border-top: 7px solid #00a000; border-bottom: 0; }
    .vt { box-sizing: border-box; border: 1px solid #008000; width: 17px; display: flex; align-items: center; justify-content: center; text-align: center; font-size: 12px; line-height: 13px; writing-mode: vertical-rl; background: #0a0a0a; }
    .vt.on { color: #00ff00; border-right-color: #0a0a0a; }
    .vt.stock { height: 19px; writing-mode: horizontal-tb; }
    .chart { width: 610px; flex: none; display: flex; flex-direction: column; }
    .periods { display: flex; height: 21px; box-sizing: border-box; padding-left: 3px; align-items: stretch; line-height: 20px; white-space: nowrap; }
    .pitems { display: flex; gap: 10px; }
    .pitems .on { color: #00e8e8; border-bottom: 2px solid #00c8c8; box-sizing: border-box; }
    .acts { display: flex; margin-left: auto; }
    .acts div { border-left: 1px solid #008000; text-align: center; box-sizing: border-box; }
    .row1, .row2 { display: flex; height: 18px; line-height: 16px; box-sizing: border-box; border-bottom: 1px solid #008000; white-space: nowrap; }
    .row1 { padding-left: 1px; }
    .row1 div, .row2 div { border-right: 1px solid #008000; text-align: center; box-sizing: border-box; flex: none; }
    .row1 .act { background: #282828; }
    .row1 .man { color: #00ffff; }
    .row2 { height: 19px; margin-left: 1px; border-top: 1px solid #008000; line-height: 17px; }
    .gold { color: #c8c800; }

    .status { display: flex; align-items: center; height: 19px; background: #e9e9e9; color: #111; font-size: 12px; white-space: nowrap; }
    .sq { width: 13px; height: 14px; margin: 0 3px 0 2px; background: linear-gradient(#f8d070, #e89010); border: 1px solid #a06000; box-sizing: border-box; flex: none; }
    .s-n { color: #ff0000; font: 700 13px "Liberation Mono", monospace; }
    .s-b { font: 13px "Liberation Mono", monospace; }
    .meter { margin-left: -2px; flex: none; }
    .link { border-left: 1px solid #808080; margin-left: 2px; padding-left: 4px; height: 19px; line-height: 18px; flex: none; font-size: 12px; }
    .sico { display: flex; gap: 5px; align-items: center; margin-left: auto; }

    .wm-top { position: absolute; left: 1058px; top: 0; width: 219px; height: 57px; background: rgba(255, 255, 255, .88); white-space: nowrap; }
    .wm-a { display: flex; align-items: center; gap: 7px; padding: 4px 0 0 4px; height: 29px; box-sizing: border-box; }
    .wm-blue { color: #0018d8; font-size: 20px; font-weight: 900; }
    .wm-black { color: #111; font-size: 17.5px; font-weight: 500; letter-spacing: .3px; }
    .wm-red { color: #e82800; font: 700 22px/26px "Liberation Sans", sans-serif; letter-spacing: -.7px; padding-left: 4px; }
    .wm-mid { position: absolute; left: 449px; top: 446px; color: #e00000; font: 700 27px/32px "Liberation Sans", "Noto Sans CJK SC", sans-serif; white-space: nowrap; opacity: .95; }
    .wm-mid b { font: 900 25px/32px "Noto Sans CJK SC", sans-serif; margin-right: 8px; }
  `;

  private _statusIcons() {
    return html`<div class="sico">
      <svg width="16" height="16" viewBox="0 0 16 16"><path d="M3 8a5 5 0 0 1 9-3M13 8a5 5 0 0 1-9 3" fill="none" stroke="#e00000" stroke-width="2"/><path d="M12 1v5H8zM4 15v-5h4z" fill="#e00000"/></svg>
      <svg width="15" height="15" viewBox="0 0 15 15"><rect x=".5" y="1.5" width="14" height="12" fill="#fff" stroke="#3060a0"/><path d="M5 6h6M5 9h6" stroke="#c8a000" stroke-width="1.5"/></svg>
      <svg width="15" height="16" viewBox="0 0 15 16"><rect x=".5" y=".5" width="14" height="15" fill="#f8f8f8" stroke="#707070"/><path d="M2 4h11M2 7h11M2 10h11M2 13h11" stroke="#909090"/></svg>
      <svg width="17" height="16" viewBox="0 0 17 16"><rect x="2" y="1" width="12" height="14" rx="3" fill="#e8d020" stroke="#706000"/><path d="M8 4v8M6 6l2-2 2 2" stroke="#605000" fill="none"/></svg>
      <svg width="15" height="18" viewBox="0 0 15 18"><path d="M7.5 5L4 17M7.5 5l3.5 12M5 12h5" stroke="#808080" fill="none"/><path d="M3 1a6 6 0 0 0 0 7M12 1a6 6 0 0 1 0 7M5 3a3 3 0 0 0 0 3M10 3a3 3 0 0 1 0 3" stroke="#a09060" fill="none"/></svg>
      <svg width="14" height="15" viewBox="0 0 14 15"><path d="M7 1l5 6H9l3 6H2l3-6H2z" fill="#707070"/></svg>
      <svg width="12" height="15" viewBox="0 0 12 15"><path d="M4 1h4v4h3v4H7v5H5V9H1V5h3z" fill="#909090"/></svg>
    </div>`;
  }

  private _meter() {
    const cell = (x0: number, on: [number, string][]) => svg`
      <rect x=${x0 + 0.5} y="1.5" width="49" height="6" fill="#f8f8f8" stroke="#b0b0b0"/>
      ${[8, 16, 24, 32, 40].map((d) => svg`<line x1=${x0 + d + 0.5} x2=${x0 + d + 0.5} y1="2" y2="7" stroke="#c0c0c0"/>`)}
      ${on.map(([x, c]) => svg`<rect x=${x0 + x} y="2" width="6" height="6" fill=${c}/>`)}
      ${[0, 7, 14, 21, 28, 35, 42].map((d) => svg`<rect x=${x0 + d} y="10" width="6" height="2" fill="#e00000"/><rect x=${x0 + d} y="13" width="6" height="2" fill="#e00000"/>`)}
    `;
    return html`<svg class="meter" width="104" height="16" viewBox="0 0 104 16" shape-rendering="crispEdges">
      ${cell(0, [[20, '#e00000']])}${cell(52, [[16, '#e00000'], [25, '#008000']])}
    </svg>`;
  }

  render() {
    return html`
      <div class="menu">
        <svg class="logo" viewBox="0 0 14 17"><rect width="14" height="17" rx="2" fill="#f06a10"/><path d="M2 14C4 8 7 4 12 2c-1 5-3 9-7 12z" fill="#fff"/></svg>
        <div class="mitems">
          ${MENU.map((m) => html`<div class=${m.includes('MASTER') ? 'master' : m.includes('特色') ? 'spec' : ''}>${m}</div>`)}
        </div>
        <div class="wtab pool">股票池<span>①</span></div>
        <div class="wtab find">发现</div>
        <div class="login">交易未登录&nbsp;&nbsp;&nbsp;协鑫集成</div>
        <div class="time">12:20:11 ...</div>
        <div class="pills"><div>行情</div><div>交易</div><div>交易</div><div>手机订单</div></div>
      </div>
      <div class="tools">
        <div class="umb"><svg width="13" height="14" viewBox="0 0 13 14"><path d="M0 7a6.5 6.5 0 0 1 13 0zM6 7h1.5v5a2 2 0 0 1-4 0h1a1 1 0 0 0 1.5 0z" fill="#ffe040"/></svg></div>
        ${TOOLS.map(([t, w, bg, c]) => html`<div class=${t === '截图' ? 'dot-b' : ''} style="width:${w}px;background:${bg};color:${c}">${t}</div>`)}
        <div class="more">选股▲咨询▲资金▲工具▲</div>
      </div>

      <div class="main">
        <side-nav></side-nav>
        <div class="center">
          <div class="upper">
            <div class="vtabs">
              <div class="arrows"><span class="tri-u"></span><span class="tri-d"></span></div>
              ${VTABS.map(([t, h]) => html`<div class="vt ${t === '技术分析' ? 'on' : ''}" style="height:${h}px">${t}</div>`)}
              <div class="vt stock">股</div>
            </div>
            <div class="chart">
              <div class="periods">
                <div class="pitems">${PERIODS.map((p) => html`<div class=${p === '日线' ? 'on' : ''}>${p}</div>`)}</div>
                <div class="acts">${ACTIONS.map(([a, w]) => html`<div style="width:${w}px">${a}</div>`)}</div>
              </div>
              <kline-chart></kline-chart>
              <div class="row1">
                ${ROW1.map(([t, w]) => html`<div class=${t === '模板' ? 'act' : t === '管理' ? 'man' : ''} style="width:${w}px">${t}</div>`)}
              </div>
            </div>
          </div>
          <div class="row2">
            ${ROW2.map(([t, w, gold]) => html`<div class=${gold ? 'gold' : ''} style="width:${w}px">${t}</div>`)}
          </div>
        </div>
        <quote-panel></quote-panel>
        <stock-list></stock-list>
      </div>

      <div class="status">
        <div class="sq"></div>
        ${STATUS.map(([t, k, m]) => html`<span class=${k === 'n' ? 's-n' : k === 'b' ? 's-b' : ''} style="margin-left:${m}px">${t}</span>`)}
        ${this._meter()}
        <div class="link">高级行情_武汉电信3</div>
        ${this._statusIcons()}
      </div>

      <div class="wm-top">
        <div class="wm-a"><span class="wm-blue">股海网</span><span class="wm-black">股票软件资源分享</span></div>
        <div class="wm-red">Www.Guhai.com.cn</div>
      </div>
      <div class="wm-mid"><b>股海网提供</b>Www.Guhai.Com.CN</div>
    `;
  }
}
